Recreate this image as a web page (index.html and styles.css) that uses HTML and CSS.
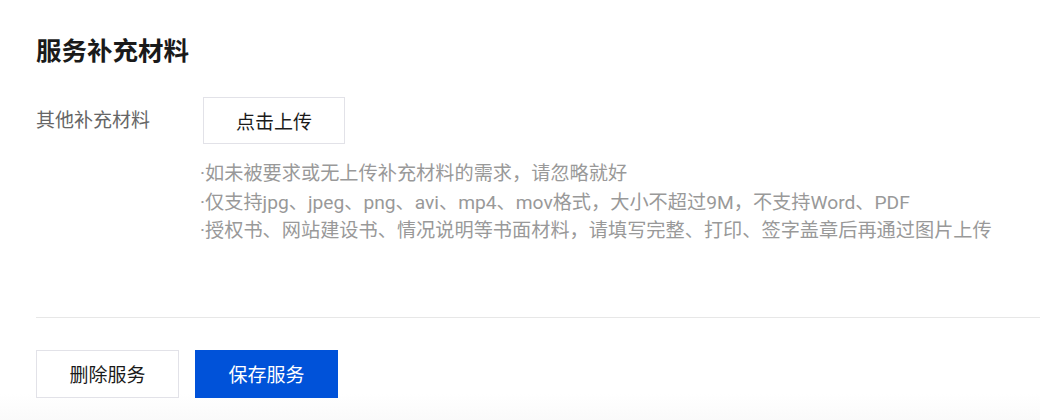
FILE: index.html
```html
<!DOCTYPE html>
<html lang="zh-CN">
<head>
<meta charset="UTF-8">
<title>服务补充材料</title>
<link rel="stylesheet" href="styles.css">
</head>
<body>
<div class="page">
<h2 class="title">服务补充材料</h2>

<div class="form-row">
<span class="label">其他补充材料</span>
<div class="field">
<button class="upload-btn">点击上传</button>
<ul class="hints">
<li>·如未被要求或无上传补充材料的需求，请忽略就好</li>
<li>·仅支持jpg、jpeg、png、avi、mp4、mov格式，大小不超过9M，不支持Word、PDF</li>
<li>·授权书、网站建设书、情况说明等书面材料，请填写完整、打印、签字盖章后再通过图片上传</li>
</ul>
</div>
</div>

<div class="actions">
<button class="btn">删除服务</button>
<button class="btn btn-primary">保存服务</button>
</div>
</div>
</body>
</html>
```

FILE: styles.css
```css
body {
margin: 0;
font-family: Roboto, "Noto Sans CJK SC", sans-serif;
background: linear-gradient(to bottom, #fff 0, #fff 394px, #fafafa 420px);
height: 420px;
overflow: hidden;
}
.page {
padding-left: 36px;
}
.title {
margin: 0;
padding-top: 37px;
font-size: 25.5px;
line-height: 28px;
font-weight: 700;
color: #1a1a1a;
}
.form-row {
display: flex;
align-items: flex-start;
margin-top: 32px;
padding-bottom: 71px;
border-bottom: 1px solid #e7e7e7;
}
.label {
width: 167px;
flex-shrink: 0;
font-size: 19px;
line-height: 47px;
color: #666;
}
.upload-btn {
width: 142px;
height: 47px;
padding: 0;
background: #fff;
border: 1px solid #e2e2e8;
font-family: inherit;
font-size: 19px;
color: #1a1a1a;
cursor: pointer;
}
.hints {
list-style: none;
margin: 16px 0 0 -3px;
padding: 0;
font-size: 19.2px;
line-height: 28.5px;
color: #999;
}
.actions {
display: flex;
gap: 16px;
padding-top: 32px;
}
.btn {
width: 143px;
height: 48px;
padding: 0;
background: #fff;
border: 1px solid #e2e2e8;
font-family: inherit;
font-size: 19px;
color: #1a1a1a;
cursor: pointer;
}
.btn-primary {
background: #0052d9;
border-color: #0052d9;
color: #fff;
}
```
